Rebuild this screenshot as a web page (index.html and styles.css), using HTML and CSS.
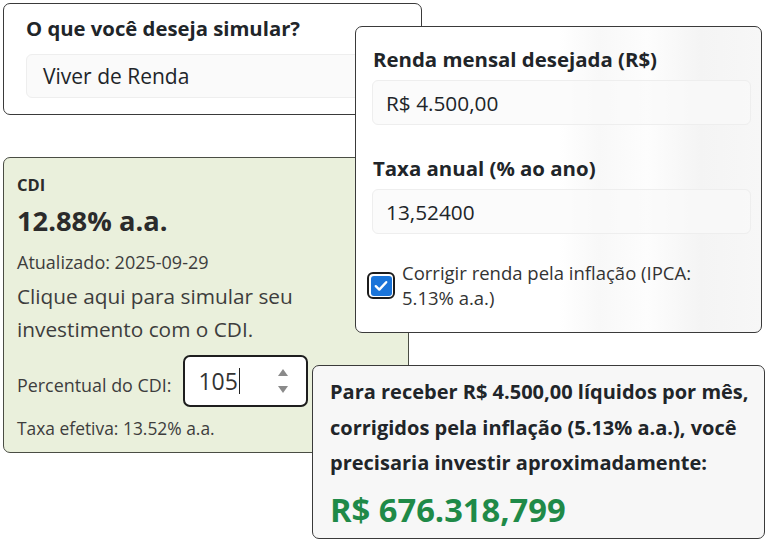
FILE: index.html
```html
<!DOCTYPE html>
<html lang="pt-BR">
<head>
<meta charset="utf-8">
<title>Simulador</title>
<link rel="stylesheet" href="styles.css">
</head>
<body>
<div class="desk">
  <section class="card card-q">
    <h2 class="q-title">O que você deseja simular?</h2>
    <div class="field select-field">Viver de Renda</div>
  </section>

  <section class="card card-cdi">
    <div class="cdi-label">CDI</div>
    <div class="cdi-rate">12.88% a.a.</div>
    <div class="cdi-updated">Atualizado: 2025-09-29</div>
    <p class="cdi-text">Clique aqui para simular seu investimento com o CDI.</p>
    <div class="cdi-row">
      <span class="cdi-row-label">Percentual do CDI:</span>
      <div class="num-input">
        <span class="num-val">105</span><span class="caret"></span>
        <svg class="spin" width="12" height="28" viewBox="0 0 12 28"><path d="M6 2 L11 9 H1 Z" fill="#8a8a8a"/><path d="M6 26 L11 19 H1 Z" fill="#8a8a8a"/></svg>
      </div>
    </div>
    <div class="cdi-eff">Taxa efetiva: 13.52% a.a.</div>
  </section>

  <section class="card card-form">
    <div class="form-label">Renda mensal desejada (R$)</div>
    <div class="field form-field">R$ 4.500,00</div>
    <div class="form-label form-label-2">Taxa anual (% ao ano)</div>
    <div class="field form-field">13,52400</div>
    <div class="check-row">
      <span class="check-box"><span class="check-inner"><svg width="14" height="12" viewBox="0 0 14 12"><path d="M1.8 6.2 L5.3 9.6 L12.2 2.2" fill="none" stroke="#fff" stroke-width="2.4" stroke-linecap="round" stroke-linejoin="round"/></svg></span></span>
      <span class="check-text">Corrigir renda pela inflação (IPCA: 5.13% a.a.)</span>
    </div>
  </section>

  <section class="card card-result">
    <p class="result-text">Para receber R$ 4.500,00 líquidos por mês, corrigidos pela inflação (5.13% a.a.), você precisaria investir aproximadamente:</p>
    <div class="result-value">R$ 676.318,799</div>
  </section>
</div>
</body>
</html>
```
FILE: styles.css
```css
* { box-sizing: border-box; }
html, body { margin: 0; padding: 0; background: #ffffff; }
body {
  font-family: "Open Sans", "Noto Sans", sans-serif;
  color: #212529;
}
.desk {
  position: relative;
  width: 768px;
  height: 543px;
  overflow: hidden;
}
.card {
  position: absolute;
  border: 1.5px solid #3a3a3a;
  border-radius: 7px;
  background: #ffffff;
}
.field {
  background: #fafafa;
  border: 1px solid #eeeeee;
  border-radius: 6px;
  display: flex;
  align-items: center;
}

/* card 1 */
.card-q {
  left: 3px; top: 3px; width: 419px; height: 112px;
  padding: 10px 22px 0 22px;
  z-index: 1;
}
.q-title {
  margin: 0;
  font-size: 20.3px;
  line-height: 28px;
  font-weight: 700;
}
.select-field {
  margin-top: 12px;
  height: 44px;
  padding-left: 16px;
  font-size: 21px;
}

/* card cdi */
.card-cdi {
  left: 3px; top: 157px; width: 406px; height: 296px;
  background: #eaf0dc;
  border-color: #4a4d44;
  padding: 17px 12px 0 13px;
  z-index: 1;
}
.cdi-label { font-size: 16.5px; line-height: 20px; font-weight: 700; color: #2b2b2b; }
.cdi-rate { margin-top: 9px; font-size: 27.3px; line-height: 34px; font-weight: 700; color: #2b2b2b; }
.cdi-updated { margin-top: 13px; font-size: 18px; line-height: 22px; color: #3d3d3d; }
.cdi-text { margin: 7px 0 0 0; font-size: 20.8px; line-height: 33px; color: #3d3d3d; width: 300px; }
.cdi-row {
  margin-top: 9px;
  display: flex;
  align-items: center;
  gap: 12px;
}
.cdi-row-label { font-size: 17.9px; color: #3d3d3d; padding-top: 7px; }
.num-input {
  width: 125px; height: 52px;
  border: 2.5px solid #1e1e1e;
  border-radius: 7px;
  background: #ffffff;
  display: flex;
  align-items: center;
  padding-left: 13px;
  padding-right: 17px;
}
.num-val { font-size: 23px; color: #333; }
.caret { width: 1px; height: 26px; background: #222; margin-left: 1px; }
.spin { margin-left: auto; }
.cdi-eff { margin-top: 11px; font-size: 17.4px; line-height: 20px; color: #3d3d3d; }

/* card form */
.card-form {
  left: 355px; top: 26px; width: 407px; height: 307px;
  padding: 18px 10px 0 16px;
  background: linear-gradient(90deg, #ffffff 0%, #ffffff 50%, #f8f8f8 60%, #fdfdfd 72%, #f4f4f4 85%, #f7f7f7 100%);
  z-index: 2;
}
.form-label { font-size: 20.4px; line-height: 28px; font-weight: 700; margin-left: 1px; }
.form-label-2 { margin-top: 29px; }
.form-field {
  margin-top: 7px;
  height: 45px;
  padding-left: 13px;
  font-size: 20.8px;
  background: rgba(250,250,250,0.7);
}
.check-row {
  margin-top: 26px;
  display: flex;
  align-items: flex-start;
  margin-left: -5px;
}
.check-box {
  margin-top: 12px;
  width: 28px; height: 27px;
  border: 2.5px solid #1c1c1c;
  border-radius: 6px;
  background: #ffffff;
  padding: 1.5px;
  display: flex;
  flex: none;
}
.check-inner {
  flex: 1;
  background: #1a74d9;
  border-radius: 3px;
  display: flex;
  align-items: center;
  justify-content: center;
}
.check-text {
  margin-left: 7px;
  font-size: 18.5px;
  line-height: 25px;
  color: #333;
  width: 340px;
}

/* card result */
.card-result {
  left: 312px; top: 365px; width: 453px; height: 174px;
  padding: 8px 10px 0 17px;
  background: #f7f7f7;
  z-index: 3;
}
.result-text {
  margin: 0;
  font-size: 20px;
  line-height: 35.5px;
  font-weight: 700;
}
.result-value {
  margin-top: 9px;
  font-size: 32.7px;
  line-height: 40px;
  font-weight: 700;
  color: #1f8a48;
}
```
